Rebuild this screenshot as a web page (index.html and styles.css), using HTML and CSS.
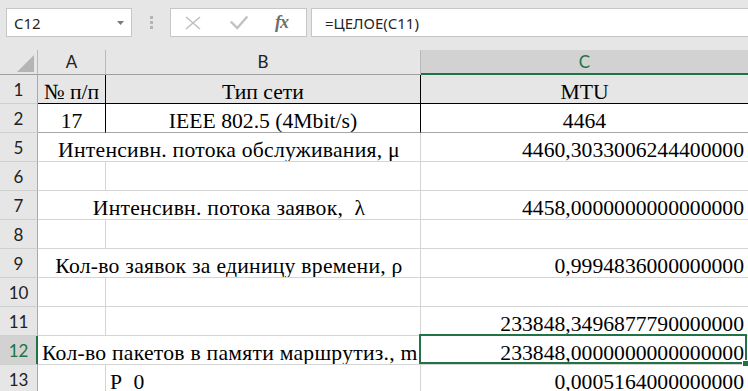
FILE: index.html
```html
<!DOCTYPE html>
<html lang="ru">
<head>
    <meta charset="UTF-8">
    <title>Лист Excel</title>
    <link rel="stylesheet" href="styles.css">
</head>
<body>
    <div class="formula-bar">
        <div class="name-box">
            <span>C12</span>
            <svg class="drop" width="7" height="4" viewBox="0 0 7 4"><polygon points="0,0 7,0 3.5,4" fill="#7a7a7a"/></svg>
        </div>
        <div class="grip"><i></i><i></i><i></i></div>
        <div class="fx-buttons">
            <svg class="btn-cancel" width="16" height="14" viewBox="0 0 16 14"><path d="M1 1 L15 13 M15 1 L1 13" stroke="#bdbdbd" stroke-width="1.4" fill="none"/></svg>
            <svg class="btn-enter" width="18" height="15" viewBox="0 0 18 15"><path d="M0.8 6.5 L7.3 13 L17.3 1.5" stroke="#c2c2c2" stroke-width="2.4" fill="none"/></svg>
            <span class="fx">fx</span>
        </div>
        <div class="formula-input">=ЦЕЛОЕ(C11)</div>
    </div>
    <table class="sheet">
        <colgroup>
            <col class="col-rh">
            <col class="col-a">
            <col class="col-b">
            <col class="col-c">
        </colgroup>
        <tr class="col-heads">
            <th class="corner"><svg width="17" height="17" viewBox="0 0 17 17"><polygon points="17,0 17,17 0,17" fill="#b4b4b4"/></svg></th>
            <th>A</th>
            <th>B</th>
            <th class="head-active">C</th>
        </tr>
        <tr class="row-title">
            <td class="rh">1</td>
            <td class="center boxed">№ п/п</td>
            <td class="center boxed">Тип сети</td>
            <td class="center">MTU</td>
        </tr>
        <tr class="row-data">
            <td class="rh">2</td>
            <td class="center boxed">17</td>
            <td class="center boxed">IEEE 802.5 (4Mbit/s)</td>
            <td class="center">4464</td>
        </tr>
        <tr>
            <td class="rh">5</td>
            <td class="center label" colspan="2">Интенсивн. потока обслуживания, μ</td>
            <td class="num">4460,3033006244400000</td>
        </tr>
        <tr>
            <td class="rh">6</td>
            <td></td>
            <td></td>
            <td></td>
        </tr>
        <tr>
            <td class="rh">7</td>
            <td class="center label pre" colspan="2">Интенсивн. потока заявок,  λ</td>
            <td class="num">4458,0000000000000000</td>
        </tr>
        <tr>
            <td class="rh">8</td>
            <td></td>
            <td></td>
            <td></td>
        </tr>
        <tr>
            <td class="rh">9</td>
            <td class="center label" colspan="2">Кол-во заявок за единицу времени, ρ</td>
            <td class="num">0,9994836000000000</td>
        </tr>
        <tr>
            <td class="rh">10</td>
            <td></td>
            <td></td>
            <td></td>
        </tr>
        <tr>
            <td class="rh">11</td>
            <td></td>
            <td></td>
            <td class="num">233848,3496877790000000</td>
        </tr>
        <tr>
            <td class="rh rh-active">12</td>
            <td class="label" colspan="2">Кол-во пакетов в памяти маршрутиз., m</td>
            <td class="num active">233848,0000000000000000</td>
        </tr>
        <tr>
            <td class="rh">13</td>
            <td></td>
            <td class="label pre">Р  0</td>
            <td class="num">0,0005164000000000</td>
        </tr>
    </table>
</body>
</html>
```

FILE: styles.css
```css
body {
    margin: 0;
    width: 748px;
    height: 391px;
    overflow: hidden;
    background-color: #fff;
}
/* Строка формул */
.formula-bar {
    display: flex;
    align-items: flex-start;
    height: 50px;
    padding-top: 8px;
    box-sizing: border-box;
    background-color: #e6e6e6;
    font-family: "Segoe UI", "Noto Sans", sans-serif;
    font-size: 15px;
    color: #262626;
}
.name-box {
    display: flex;
    align-items: center;
    justify-content: space-between;
    margin-left: 6px;
    width: 126px;
    height: 29px;
    padding: 0 7px 0 7px;
    box-sizing: border-box;
    border: 1px solid #c6c6c6;
    background-color: #fff;
}
.grip {
    display: flex;
    flex-direction: column;
    gap: 2px;
    margin: 8px 0 0 18px;
}
.grip i {
    display: block;
    width: 3px;
    height: 3px;
    background-color: #b4b4b4;
}
.fx-buttons {
    display: flex;
    align-items: center;
    margin-left: 17px;
    width: 137px;
    height: 29px;
    padding-left: 14px;
    box-sizing: border-box;
    border: 1px solid #c6c6c6;
    background-color: #fff;
}
.btn-enter {
    margin-left: 29px;
}
.fx {
    margin-left: 27px;
    font-family: "Liberation Serif", serif;
    font-style: italic;
    font-weight: bold;
    font-size: 18px;
    color: #6e6e6e;
    letter-spacing: -1px;
}
.formula-input {
    flex: 1;
    display: flex;
    align-items: center;
    margin-left: 4px;
    height: 29px;
    padding-left: 13px;
    box-sizing: border-box;
    border: 1px solid #c6c6c6;
    border-right: none;
    background-color: #fff;
}
/* Таблица */
.sheet {
    border-collapse: separate;
    border-spacing: 0;
    table-layout: fixed;
    width: 749px;
}
.col-rh { width: 38px; }
.col-a { width: 68px; }
.col-b { width: 315px; }
.col-c { width: 328px; }
.sheet tr {
    height: 29px;
}
.sheet tr.col-heads {
    height: 25px;
}
.col-heads th {
    padding: 0 0 1px 0;
    font-family: Lato, "Noto Sans", sans-serif;
    font-weight: normal;
    font-size: 17px;
    color: #222;
    background-color: #e6e6e6;
    border-right: 1px solid #b9b9b9;
    border-bottom: 1px solid #9f9f9f;
}
.col-heads .corner {
    text-align: right;
    vertical-align: bottom;
    padding: 0 3px 2px 0;
}
.corner svg {
    display: block;
    margin-left: auto;
}
.col-heads .head-active {
    background-color: #d2d2d2;
    color: #217346;
    border-bottom-color: #217346;
    box-shadow: inset 0 -1px 0 #217346;
}
.sheet td {
    padding: 0 4px;
    font-family: "Liberation Serif", "Times New Roman", serif;
    font-size: 21.67px;
    line-height: 22px;
    color: #000;
    vertical-align: bottom;
    white-space: nowrap;
    overflow: hidden;
    border-right: 1px solid #d4d4d4;
    border-bottom: 1px solid #d4d4d4;
}
.sheet td.label {
    letter-spacing: 0.25px;
}
.sheet td.pre {
    white-space: pre;
}
.sheet td.rh {
    padding: 0 0 3px 0;
    text-align: center;
    font-family: Lato, "Noto Sans", sans-serif;
    font-size: 17px;
    line-height: 20px;
    color: #222;
    background-color: #e6e6e6;
    border-right: 1px solid #a9a9a9;
    border-bottom: 1px solid #cfcfcf;
}
.sheet td.rh-active {
    background-color: #d2d2d2;
    color: #217346;
    border-right-color: #217346;
    box-shadow: inset -1px 0 0 #217346;
}
.center {
    text-align: center;
}
.num {
    text-align: right;
}
/* Заголовки и первая строка данных в рамке */
.row-title td:not(.rh) {
    background-color: #e7e6e6;
    border-bottom-color: #000;
}
.boxed {
    border-right-color: #000 !important;
}
.row-data td:not(.rh) {
    border-bottom-color: #a6a6a6;
}
/* Активная ячейка */
.sheet td.active {
    position: relative;
    overflow: visible;
}
.active::before {
    content: '';
    position: absolute;
    top: -2px;
    left: -2px;
    right: 1px;
    bottom: 0;
    border: 2px solid #217346;
}
.active::after {
    content: '';
    position: absolute;
    right: 0;
    bottom: -2px;
    width: 5px;
    height: 5px;
    background-color: #217346;
    border-left: 1px solid #fff;
    border-top: 1px solid #fff;
}
```
